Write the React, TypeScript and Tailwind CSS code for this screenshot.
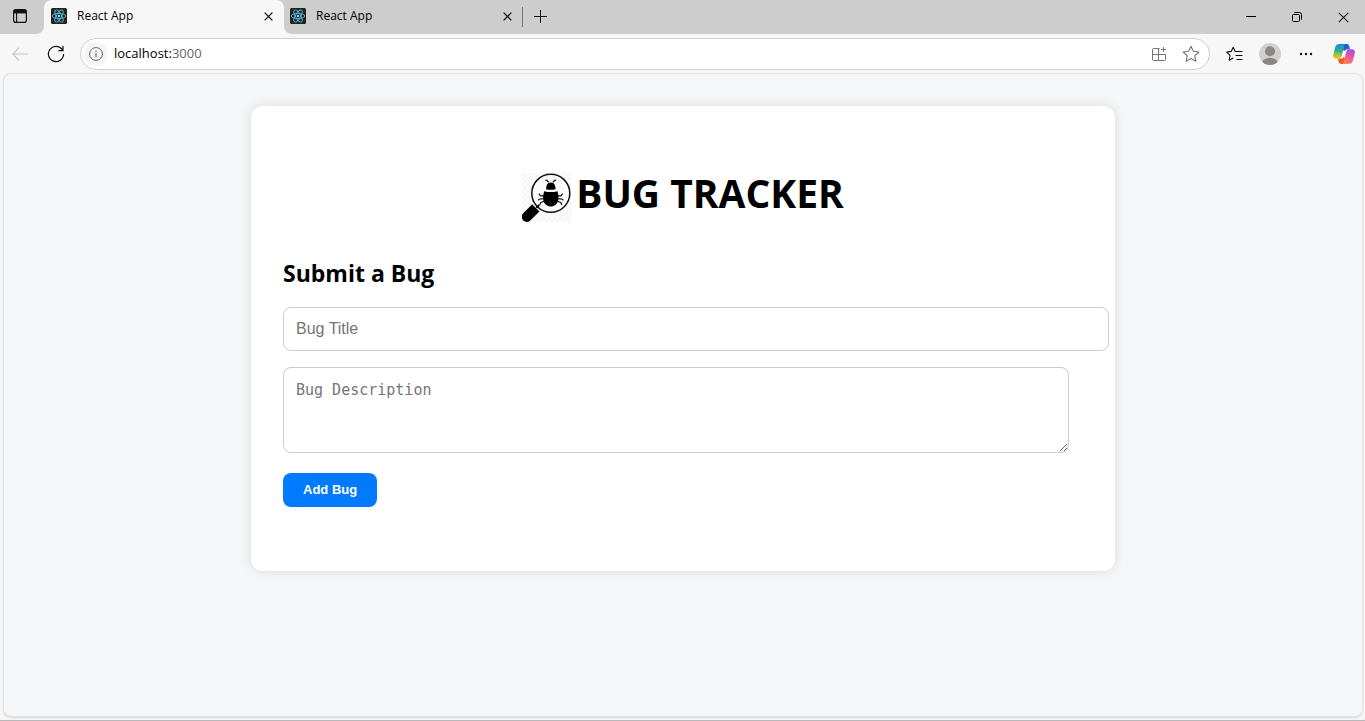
import React from "react";

function ReactLogo() {
  return (
    <svg width="16" height="16" viewBox="0 0 16 16" className="shrink-0" aria-hidden="true">
      <rect width="16" height="16" rx="1.5" fill="#222222" />
      <g fill="none" stroke="#53b9d3" strokeWidth="0.9">
        <ellipse cx="8" cy="8" rx="6.8" ry="2.6" />
        <ellipse cx="8" cy="8" rx="6.8" ry="2.6" transform="rotate(60 8 8)" />
        <ellipse cx="8" cy="8" rx="6.8" ry="2.6" transform="rotate(120 8 8)" />
      </g>
      <circle cx="8" cy="8" r="1.3" fill="#61dafb" />
    </svg>
  );
}

function CloseIcon({ size, width }: { size: number; width: number }) {
  return (
    <svg width={size} height={size} viewBox="0 0 10 10" fill="none" stroke="#111" strokeWidth={width} aria-hidden="true">
      <path d="M0.7 0.7 9.3 9.3M9.3 0.7 0.7 9.3" />
    </svg>
  );
}

function Tab() {
  return (
    <div className="flex h-8 min-w-0 items-center">
      <ReactLogo />
      <span className="ml-[10px] flex-1 truncate text-xs text-black">React App</span>
      <button type="button" aria-label="Close tab" className="flex size-4 items-center justify-center">
        <CloseIcon size={9} width={1.5} />
      </button>
    </div>
  );
}

function TabStrip() {
  return (
    <header className="flex h-[34px] bg-[#f7f7f7]">
      <div className="w-11 shrink-0 rounded-br-lg bg-[#cdcdcd]">
        <button type="button" aria-label="Tab actions" className="flex h-8 w-10 items-center justify-center">
          <svg width="14" height="14" viewBox="0 0 14 14" fill="none" stroke="#111" aria-hidden="true">
            <rect x="0.6" y="0.6" width="12.8" height="12.8" rx="2.2" strokeWidth="1.2" />
            <path d="M1 2.7H13" strokeWidth="3.4" />
            <path d="M3.6 4V13" strokeWidth="1.1" />
          </svg>
        </button>
      </div>
      <div className="w-60 shrink-0 bg-[#cdcdcd]">
        <div className="h-full rounded-t-lg bg-[#f7f7f7] pl-[7px] pr-2">
          <Tab />
        </div>
      </div>
      <div className="flex min-w-0 flex-1 rounded-bl-lg bg-[#cdcdcd]">
        <div className="w-[238px] shrink-0 pl-1.5 pr-[7px]">
          <Tab />
        </div>
        <div className="mt-[7px] h-5 w-px shrink-0 bg-[#777]" />
        <button type="button" aria-label="New tab" className="flex h-8 w-[34px] items-center justify-center">
          <svg width="13" height="13" viewBox="0 0 13 13" stroke="#111" strokeWidth="1" aria-hidden="true">
            <path d="M6.5 0V13M0 6.5H13" />
          </svg>
        </button>
        <div className="ml-auto flex h-[34px]">
          <button type="button" aria-label="Minimize" className="flex w-[46px] items-center justify-center pl-0.5">
            <svg width="10" height="10" viewBox="0 0 10 10" stroke="#000" aria-hidden="true">
              <path d="M0 4.5H10" />
            </svg>
          </button>
          <button type="button" aria-label="Restore" className="flex w-[46px] items-center justify-center pl-0.5">
            <svg width="10" height="10" viewBox="0 0 10 10" fill="none" stroke="#000" aria-hidden="true">
              <rect x="0.5" y="2.5" width="7" height="7" rx="1" />
              <path d="M2.3 0.5H7.5A2 2 0 0 1 9.5 2.5V7.7" />
            </svg>
          </button>
          <button type="button" aria-label="Close window" className="flex w-[46px] items-center justify-center pl-0.5">
            <CloseIcon size={11} width={0.95} />
          </button>
        </div>
      </div>
    </header>
  );
}

function CopilotLogo() {
  return (
    <svg width="22" height="20" viewBox="0 0 22 20" aria-hidden="true">
      <defs>
        <linearGradient id="cp-left" x1="0.4" y1="0" x2="0.3" y2="1">
          <stop offset="0" stopColor="#1b8de2" />
          <stop offset="0.45" stopColor="#2fae8c" />
          <stop offset="0.75" stopColor="#a6c83c" />
          <stop offset="1" stopColor="#f5c518" />
        </linearGradient>
        <linearGradient id="cp-right" x1="0.7" y1="0" x2="0.3" y2="1">
          <stop offset="0" stopColor="#a44fe8" />
          <stop offset="0.5" stopColor="#e8569b" />
          <stop offset="1" stopColor="#ff8b4a" />
        </linearGradient>
        <linearGradient id="cp-top" x1="0" y1="0" x2="1" y2="1">
          <stop offset="0" stopColor="#1746c4" />
          <stop offset="1" stopColor="#2a7cf0" />
        </linearGradient>
      </defs>
      <path d="M10 0H13.6C15.1 0 15.8 0.8 16.3 2.2L17.2 5.4H14.4C12.8 5.4 12.1 6 11.5 7L10 6Z" fill="url(#cp-top)" />
      <path d="M12 20H8.4C6.9 20 6.2 19.2 5.7 17.8L4.8 14.6H7.6C9.2 14.6 9.9 14 10.5 13L12 14Z" fill="#ee5a32" />
      <path d="M6.5 0H13C11.9 0.4 11.5 1.4 11.1 2.8L8.9 11.6C8.3 13.7 7.2 14.7 5.2 14.7H3C0.7 14.7-0.2 13.1 0.2 10.8L2.2 3.2C2.8 1 4.3 0 6.5 0Z" fill="url(#cp-left)" />
      <path d="M15.5 20H9C10.1 19.6 10.5 18.6 10.9 17.2L13.1 8.4C13.7 6.3 14.8 5.3 16.8 5.3H19C21.3 5.3 22.2 6.9 21.8 9.2L19.8 16.8C19.2 19 17.7 20 15.5 20Z" fill="url(#cp-right)" />
    </svg>
  );
}

const starPath =
  "M8 1.2 10.1 5.6 14.9 6.2 11.4 9.6 12.3 14.4 8 12.1 3.7 14.4 4.6 9.6 1.1 6.2 5.9 5.6Z";

function Toolbar() {
  return (
    <nav aria-label="Browser toolbar" className="flex h-[39px] items-center">
      <button type="button" aria-label="Back" className="flex w-10 justify-center">
        <svg width="16" height="14" viewBox="0 0 16 14" fill="none" stroke="#c6c6c6" strokeWidth="1.1" aria-hidden="true">
          <path d="M16 7H0.8M7 0.7 0.8 7 7 13.3" />
        </svg>
      </button>
      <button type="button" aria-label="Refresh" className="flex w-8 justify-center">
        <svg width="18" height="18" viewBox="0 0 18 18" fill="none" stroke="#111" strokeWidth="1.2" aria-hidden="true">
          <path d="M15.6 5.2A7.6 7.6 0 1 0 16.6 9M16 1V5.6H11.4" />
        </svg>
      </button>
      <div className="ml-2 mt-px flex h-8 min-w-0 flex-1 items-center rounded-full border border-[#cfcfcf] bg-white pl-[3px] pr-[10px]">
        <button type="button" aria-label="Site information" className="flex size-6 shrink-0 items-center justify-center rounded-full bg-[#f5f5f5]">
          <svg width="14" height="14" viewBox="0 0 14 14" fill="none" stroke="#666" aria-hidden="true">
            <circle cx="7" cy="7" r="6.4" />
            <path d="M7 6.2V10.2" strokeWidth="1.2" />
            <circle cx="7" cy="4.3" r="0.8" fill="#666" stroke="none" />
          </svg>
        </button>
        <span className="ml-[6px] flex-1 truncate text-[13px] text-black">
          localhost:<span className="text-[#666]">3000</span>
        </span>
        <button type="button" aria-label="Install app" className="flex size-8 items-center justify-center">
          <svg width="16" height="16" viewBox="0 0 16 16" fill="none" stroke="#767676" aria-hidden="true">
            <path d="M8.5 2.5H2.5A1 1 0 0 0 1.5 3.5V13.5A1 1 0 0 0 2.5 14.5H13.5A1 1 0 0 0 14.5 13.5V8.5H1.5M7.5 2.5V14.5M12.5 1V6M10 3.5H15" />
          </svg>
        </button>
        <button type="button" aria-label="Add to favorites" className="-mr-2 flex size-8 items-center justify-center">
          <svg width="18" height="18" viewBox="0 0 16 16" fill="none" stroke="#767676" strokeLinejoin="round" aria-hidden="true">
            <path d={starPath} />
          </svg>
        </button>
      </div>
      <div className="ml-[6px] flex items-center">
        <button type="button" aria-label="Favorites" className="flex w-9 justify-center">
          <svg width="17" height="16" viewBox="0 0 17 16" fill="none" stroke="#111" strokeWidth="1.1" strokeLinejoin="round" aria-hidden="true">
            <path d="M10.8 5.5 9.2 5.4 7.2 1.2 5.2 5.4 0.7 6.1 4 9.3 3.2 14.2 7.2 12M16.5 5.5H10.8M16.5 9.5H9.5M16.5 13.5H10.5" />
          </svg>
        </button>
        <button type="button" aria-label="Profile" className="flex w-9 justify-center">
          <svg width="22" height="22" viewBox="0 0 22 22" aria-hidden="true">
            <clipPath id="avatar-clip">
              <circle cx="11" cy="11" r="11" />
            </clipPath>
            <g clipPath="url(#avatar-clip)">
              <rect width="22" height="22" fill="#d2d0ce" />
              <circle cx="11" cy="8.3" r="5" fill="#8a8886" />
              <ellipse cx="11" cy="20" rx="8" ry="5.2" fill="#8a8886" />
            </g>
          </svg>
        </button>
        <button type="button" aria-label="Settings and more" className="flex w-9 justify-center">
          <svg width="14" height="4" viewBox="0 0 14 4" fill="#111" aria-hidden="true">
            <circle cx="2" cy="2" r="1.2" />
            <circle cx="7" cy="2" r="1.2" />
            <circle cx="12" cy="2" r="1.2" />
          </svg>
        </button>
        <button type="button" aria-label="Copilot" className="flex w-[41px] justify-center pr-0.5">
          <CopilotLogo />
        </button>
      </div>
    </nav>
  );
}

function BugLogo() {
  return (
    <svg width="50" height="50" viewBox="0 0 50 50" className="shrink-0" aria-hidden="true">
      <defs>
        <pattern id="lattice" width="6" height="6" patternUnits="userSpaceOnUse">
          <path d="M0 0 6 6M6 0 0 6" stroke="#f2f2f2" strokeWidth="0.7" />
        </pattern>
      </defs>
      <rect width="49" height="49" fill="#fbfbfb" />
      <rect width="49" height="49" fill="url(#lattice)" />
      <circle cx="28.8" cy="20.3" r="19" fill="#fcfcfc" stroke="#111" strokeWidth="1.5" />
      <path d="M10.2 31.2 17.4 38.4 8.6 47.3A5 5 0 0 1 1.2 40.2Z" fill="#000" />
      <path d="M14.4 34.8 17.2 32" stroke="#000" strokeWidth="2" />
      <path d="M24 16.2A4.8 4.8 0 0 1 33.6 16.2Q28.8 17.4 24 16.2ZM24.5 13A4.4 4.4 0 0 1 33.1 13L33.5 15H24.1Z" fill="#000" />
      <path d="M22.2 18.2Q28.8 20 35.4 18.2Q37.3 23 36.3 27.5C35.3 31.3 32.2 33.5 28.8 33.5S22.3 31.3 21.3 27.5Q20.3 23 22.2 18.2Z" fill="#000" />
      <path
        d="M26.7 9.2 24.8 7.4 23.4 7.2M30.9 9.2 32.8 7.4 34.2 7.2M21.8 22.8H18.5L17 20.7M35.8 22.8H39.1L40.6 20.7M21.3 25.6 17.2 26.2 16.2 27.3M36.3 25.6 40.4 26.2 41.4 27.3M22.2 28.3 18.8 29.5 17.7 31.9M35.4 28.3 38.8 29.5 39.9 31.9"
        fill="none"
        stroke="#111"
        strokeWidth="1.2"
      />
    </svg>
  );
}

function BugForm() {
  return (
    <form onSubmit={(e) => e.preventDefault()}>
      <h2 className="text-[23px] font-bold leading-8 text-black">Submit a Bug</h2>
      <input
        type="text"
        aria-label="Bug Title"
        placeholder="Bug Title"
        className="mt-[18px] block h-11 w-[calc(100%+26px)] rounded-lg border border-[#ccc] bg-white px-3 font-['Liberation_Sans',sans-serif] text-base placeholder:text-[#757575]"
      />
      <textarea
        aria-label="Bug Description"
        placeholder="Bug Description"
        className="mt-4 block h-[86px] w-[calc(100%-14px)] resize rounded-lg border border-[#ccc] bg-white px-3 py-2.5 font-['DejaVu_Sans_Mono',monospace] text-[15px] leading-6 placeholder:text-[#757575]"
      />
      <button
        type="submit"
        className="mt-5 h-[34px] rounded-lg bg-[#007bff] px-5 font-['Liberation_Sans',sans-serif] text-[13px] font-bold text-white"
      >
        Add Bug
      </button>
    </form>
  );
}

export default function App() {
  return (
    <div className="flex min-h-screen flex-col border-b border-[#b8b8b8] bg-[#f7f7f7] font-['Open_Sans','Noto_Sans',sans-serif]">
      <TabStrip />
      <Toolbar />
      <main className="ml-[3px] mr-0.5 mb-[3px] flex-1 rounded-lg border border-[#e2e3e4] bg-[#f4f6f8] px-4 py-8 shadow-[0_1px_2px_rgba(0,0,0,0.12)]">
        <section className="mx-auto max-w-[864px] rounded-xl bg-white px-8 pb-16 pt-[59px] shadow-[0_0_12px_rgba(0,0,0,0.1)]">
          <div className="mb-[34px] flex items-end justify-center gap-1">
            <BugLogo />
            <h1 className="pb-0.5 text-[39px] font-bold leading-[56px] text-black">BUG TRACKER</h1>
          </div>
          <BugForm />
        </section>
      </main>
    </div>
  );
}
